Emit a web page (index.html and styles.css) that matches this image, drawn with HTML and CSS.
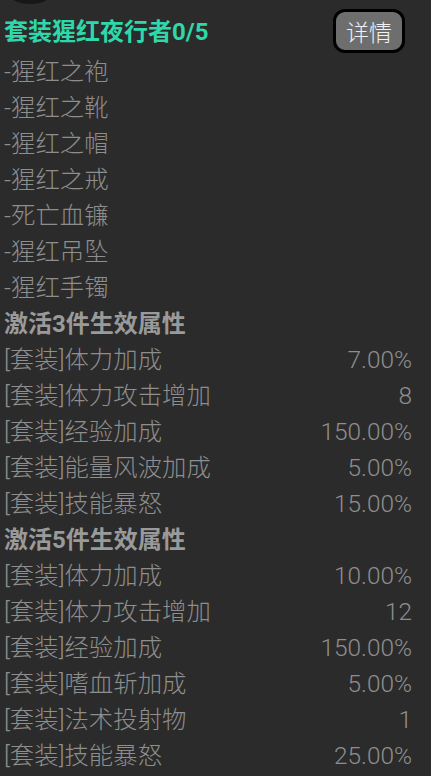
FILE: index.html
```html
<!DOCTYPE html>
<html lang="zh">
<head>
<meta charset="utf-8">
<link rel="stylesheet" href="styles.css">
</head>
<body>
<div class="page">
  <div class="knob"></div>
  <div class="header">
    <div class="title">套装猩红夜行者0/5</div>
    <button class="detail">详情</button>
  </div>
  <div class="list">
    <div class="row">-猩红之袍</div>
    <div class="row">-猩红之靴</div>
    <div class="row">-猩红之帽</div>
    <div class="row">-猩红之戒</div>
    <div class="row">-死亡血镰</div>
    <div class="row">-猩红吊坠</div>
    <div class="row">-猩红手镯</div>
    <div class="row heading">激活3件生效属性</div>
    <div class="row stat"><span>[套装]体力加成</span><span>7.00%</span></div>
    <div class="row stat"><span>[套装]体力攻击增加</span><span>8</span></div>
    <div class="row stat"><span>[套装]经验加成</span><span>150.00%</span></div>
    <div class="row stat"><span>[套装]能量风波加成</span><span>5.00%</span></div>
    <div class="row stat"><span>[套装]技能暴怒</span><span>15.00%</span></div>
    <div class="row heading">激活5件生效属性</div>
    <div class="row stat"><span>[套装]体力加成</span><span>10.00%</span></div>
    <div class="row stat"><span>[套装]体力攻击增加</span><span>12</span></div>
    <div class="row stat"><span>[套装]经验加成</span><span>150.00%</span></div>
    <div class="row stat"><span>[套装]嗜血斩加成</span><span>5.00%</span></div>
    <div class="row stat"><span>[套装]法术投射物</span><span>1</span></div>
    <div class="row stat"><span>[套装]技能暴怒</span><span>25.00%</span></div>
  </div>
</div>
</body>
</html>
```
FILE: styles.css
```css
html, body {
  margin: 0;
  padding: 0;
  background: #2b2b2b;
  height: 100%;
  overflow: hidden;
}
.page {
  position: relative;
  font-family: Roboto, "Noto Sans CJK SC", sans-serif;
  font-size: 24.4px;
  font-weight: 300;
  color: #8e8e8e;
}
.knob {
  position: absolute;
  left: 12px;
  top: -10px;
  width: 36px;
  height: 14px;
  border-radius: 50%;
  background: #171717;
}
.header {
  height: 54px;
  display: flex;
  align-items: flex-start;
  justify-content: space-between;
  padding: 0 26px 0 4px;
  box-sizing: border-box;
}
.title {
  margin-top: 14px;
  height: 36px;
  line-height: 36px;
  font-size: 24px;
  font-weight: bold;
  color: #2ed8aa;
}
.detail {
  margin-top: 9px;
  width: 72px;
  height: 44px;
  box-sizing: border-box;
  border: 3px solid #000;
  border-radius: 12px;
  background: #6e6e6e;
  color: #f2f2f2;
  font-family: "Noto Sans CJK SC", sans-serif;
  font-size: 23px;
  font-weight: 300;
  padding: 0;
  line-height: 36px;
}
.list {
  padding: 0 19px 0 4px;
}
.row {
  height: 36px;
  line-height: 36px;
  white-space: nowrap;
}
.stat {
  display: flex;
  justify-content: space-between;
}
.heading {
  font-weight: bold;
  font-size: 24px;
  color: #9a9a9a;
}
```
